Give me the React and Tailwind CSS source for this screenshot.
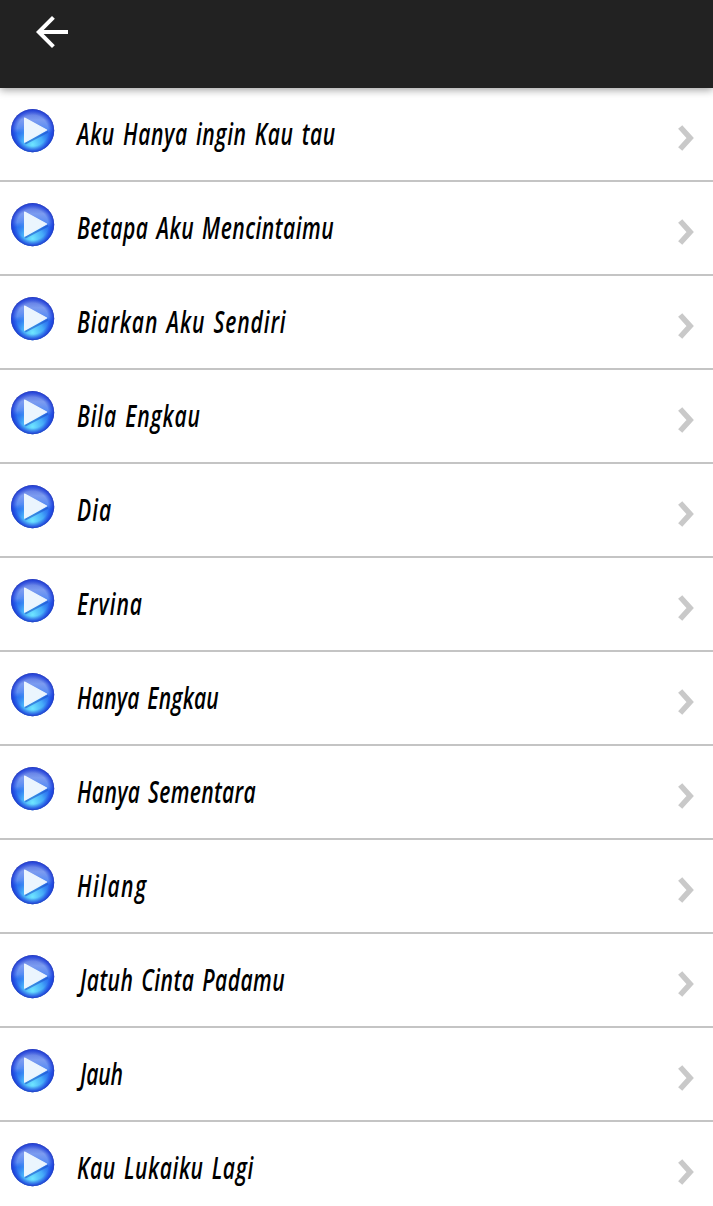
import { useLayoutEffect, useRef, useState } from 'react'

const songs = [
  { title: 'Aku Hanya ingin Kau tau', width: 258 },
  { title: 'Betapa Aku Mencintaimu',  width: 257 },
  { title: 'Biarkan Aku Sendiri',     width: 209 },
  { title: 'Bila Engkau',             width: 123 },
  { title: 'Dia',                     width: 34 },
  { title: 'Ervina',                  width: 65 },
  { title: 'Hanya Engkau',            width: 142 },
  { title: 'Hanya Sementara',         width: 179 },
  { title: 'Hilang',                  width: 69 },
  { title: 'Jatuh Cinta Padamu',      width: 205, indent: true },
  { title: 'Jauh',                    width: 43, indent: true },
  { title: 'Kau Lukaiku Lagi',        width: 176 },
]

const SQUEEZE = 0.68

function PlayIcon() {
  return (
    <svg className="w-11 h-11 shrink-0" viewBox="0.4 0.4 44 44">
      <defs>
        <linearGradient id="ball" x1="0" y1="0" x2="0" y2="1">
          <stop offset="0" stopColor="#5068dc" />
          <stop offset="0.25" stopColor="#7c9cf0" />
          <stop offset="0.45" stopColor="#5b8df3" />
          <stop offset="0.56" stopColor="#2a6cf0" />
          <stop offset="1" stopColor="#2c6cec" />
        </linearGradient>
        <radialGradient id="glow" cx="0.5" cy="0.82" r="0.5">
          <stop offset="0" stopColor="#6fe6ff" />
          <stop offset="0.5" stopColor="#4dbcfb" stopOpacity="0.8" />
          <stop offset="1" stopColor="#2f7df0" stopOpacity="0" />
        </radialGradient>
        <radialGradient id="rim" cx="0.5" cy="0.5" r="0.5">
          <stop offset="0.72" stopColor="#1a3ad8" stopOpacity="0" />
          <stop offset="0.93" stopColor="#1a3ad8" stopOpacity="0.75" />
          <stop offset="1" stopColor="#2a3cb8" />
        </radialGradient>
      </defs>
      <circle cx="22" cy="22" r="21.6" fill="url(#ball)" />
      <circle cx="22" cy="22" r="21.6" fill="url(#glow)" />
      <circle cx="22" cy="22" r="21.6" fill="url(#rim)" />
      <path d="M14.5 35L37.5 23" stroke="#1d50c8" strokeOpacity="0.55" strokeWidth="1.8" />
      <path d="M14 9.5L36 21.4L14 33.6Z" fill="#ebf5fe" stroke="#ebf5fe" strokeWidth="1.2" strokeLinejoin="round" />
    </svg>
  )
}

function SongTitle({ title, width, indent }) {
  const ref = useRef(null)
  const [spacing, setSpacing] = useState(0)

  // spread the letters so the squeezed title fills its width
  useLayoutEffect(() => {
    const natural = ref.current.offsetWidth
    setSpacing((width / SQUEEZE - natural) / (title.length - 1))
  }, [title, width])

  return (
    <span
      ref={ref}
      className={`inline-block origin-left whitespace-nowrap [word-spacing:3px] ${indent ? 'ml-[3px]' : ''}`}
      style={{ transform: `scaleX(${SQUEEZE})`, letterSpacing: spacing }}
    >
      {title}
    </span>
  )
}

function SongRow({ song }) {
  return (
    <li className="flex h-[94px] shrink-0 items-start border-b-2 border-[#c4c4c4] pl-[11px] pr-[18px]">
      <div className="pt-[21px]">
        <PlayIcon />
      </div>
      <div className="flex-1 pl-[22px] pt-[25px] text-[31px] leading-[40px] font-semibold italic text-black">
        <SongTitle {...song} />
      </div>
      <svg className="mt-9 h-7 w-[18px] shrink-0" viewBox="0 0 18 28" fill="none">
        <path d="M3.2 3L13.1 14L3.2 25" stroke="#c9c9c9" strokeWidth="5.6" />
      </svg>
    </li>
  )
}

export default function App() {
  return (
    <div className="flex h-[1206px] w-[713px] flex-col overflow-hidden bg-white font-['Open_Sans','Noto_Sans',sans-serif]">
      <header className="z-10 h-[88px] shrink-0 bg-[#222222] pl-7 pt-2 shadow-[0_2px_8px_rgba(0,0,0,0.38)]">
        <button aria-label="Back" className="block">
          <svg className="h-12 w-12" viewBox="0 0 24 24" fill="#fff">
            <path d="M20 11H7.83l5.59-5.59L12 4l-8 8 8 8 1.41-1.41L7.83 13H20v-2z" />
          </svg>
        </button>
      </header>
      <ul className="flex flex-col">
        {songs.map((song) => (
          <SongRow key={song.title} song={song} />
        ))}
      </ul>
    </div>
  )
}
